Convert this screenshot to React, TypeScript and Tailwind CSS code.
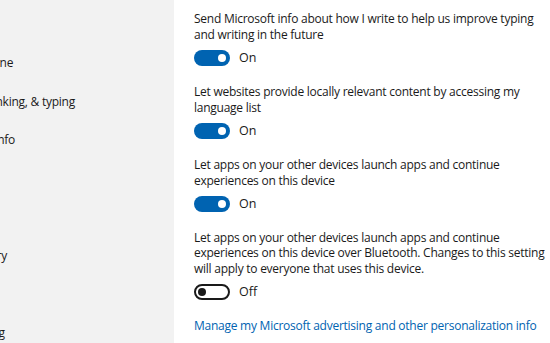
import React from "react";

type Setting = { text: string; on: boolean };

const settings: Setting[] = [
  { text: "Send Microsoft info about how I write to help us improve typing and writing in the future", on: true },
  { text: "Let websites provide locally relevant content by accessing my language list", on: true },
  { text: "Let apps on your other devices launch apps and continue experiences on this device", on: true },
  {
    text: "Let apps on your other devices launch apps and continue experiences on this device over Bluetooth. Changes to this setting will apply to everyone that uses this device.",
    on: false,
  },
];

const navItems = ["Microphone", "Speech, inking, & typing", "Account info", "Contacts", "Calendar", "Call history", "Email", "Messaging"];

function Toggle({ on }: { on: boolean }) {
  return (
    <div className="flex items-center gap-[9px]">
      {on ? (
        <div className="flex h-[16px] w-[36px] items-center justify-end rounded-full bg-[#0063b1] pr-[4px]">
          <div className="h-[8px] w-[8px] rounded-full bg-white" />
        </div>
      ) : (
        <div className="flex h-[16px] w-[36px] items-center justify-start rounded-full border-2 border-[#1a1a1a] bg-white pl-[2px]">
          <div className="h-[8px] w-[8px] rounded-full bg-[#1a1a1a]" />
        </div>
      )}
      <span className="text-[12.5px] leading-[16px] text-[#1a1a1a]">{on ? "On" : "Off"}</span>
    </div>
  );
}

export default function App() {
  return (
    <div className="flex h-[343px] w-[550px] overflow-hidden bg-white font-['Open_Sans','Noto_Sans',sans-serif] text-[#1a1a1a]">
      {/* Sidebar, scrolled so only the end of each label shows */}
      <div className="w-[174px] shrink-0 overflow-hidden bg-[#f2f2f2]">
        <div className="-ml-[52px] flex flex-col pt-[55px]">
          {navItems.map((item) => (
            <div key={item} className="h-[38.5px] whitespace-nowrap text-[12px] leading-[16px] tracking-[-0.25px]">
              {item}
            </div>
          ))}
        </div>
      </div>

      {/* Main content */}
      <div className="flex flex-1 flex-col pl-[20px] pt-[11px]">
        {settings.map((s, i) => (
          <div key={i} className="mb-[18px] flex flex-col gap-[7.5px]">
            <p className="text-[12px] leading-[15.7px] tracking-[-0.25px]">{s.text}</p>
            <Toggle on={s.on} />
          </div>
        ))}
        <a className="whitespace-nowrap text-[12px] leading-[16px] tracking-[-0.25px] text-[#0063b1]">
          Manage my Microsoft advertising and other personalization info
        </a>
      </div>
    </div>
  );
}
